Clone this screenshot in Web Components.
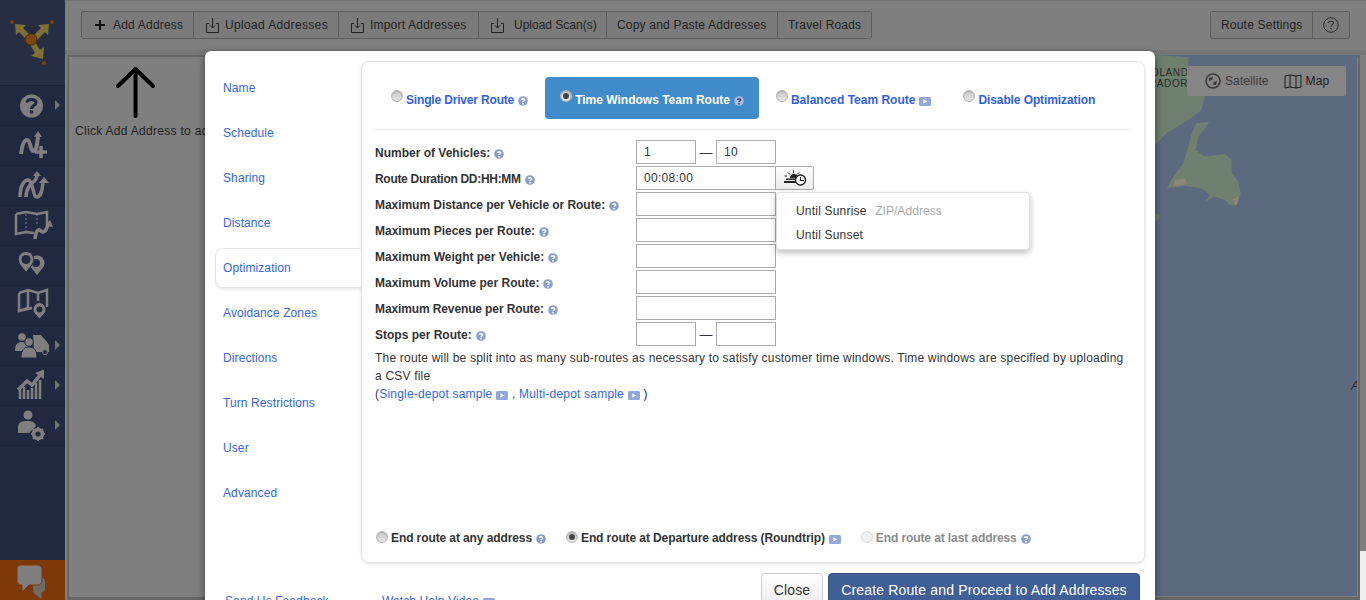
<!DOCTYPE html>
<html lang="en">
<head>
<meta charset="UTF-8">
<title>Route Optimization</title>
<style>
html, body { margin: 0; height: 600px; overflow: hidden; background: #fff; }
body { font: 12px "Liberation Sans", Arial, sans-serif; color: #333; }
</style>
</head>
<body>
<route-app></route-app>

<script>
// small helper: every element gets an open shadow root with its own style + markup
function define(name, css, html, setup) {
    customElements.define(name, class extends HTMLElement {
        constructor() {
            super();
            const root = this.attachShadow({mode: 'open'});
            const tpl = document.createElement('template');
            tpl.innerHTML = `<style>${css}</style>` + (typeof html === 'function' ? html(this) : html);
            root.appendChild(tpl.content.cloneNode(true));
            if (setup) setup(this, root);
        }
    });
}

const questionStroke = (c) => `<path d="M3.4 3.9C3.5 2.4 6.6 2.3 6.6 3.9C6.6 5 5 5 5 6.2" fill="none" stroke="${c}" stroke-width="1.5"/><rect x="4.2" y="7" width="1.6" height="1.5" fill="${c}"/>`;

define('help-dot', `:host{display:inline-block;width:10px;height:10px;vertical-align:-2px;margin-left:4px} svg{display:block}`,
    (el) => {
        const on = el.hasAttribute('light');
        return `<svg width="10" height="10" viewBox="0 0 10 10"><circle cx="5" cy="5" r="4.8" fill="${on ? '#a9b9e2' : '#8a9ccf'}"/>${questionStroke(on ? '#3c4f88' : '#fff')}</svg>`;
    });

define('play-dot', `:host{display:inline-block;width:12px;height:9px;vertical-align:-2px;margin-left:4px} svg{display:block}`,
    `<svg width="12" height="9" viewBox="0 0 12 9"><rect width="12" height="9" rx="1.5" fill="#93a7dc"/><path d="M4.4 2.2L8.2 4.5L4.4 6.8Z" fill="#fff"/></svg>`);

define('radio-mark', `
    :host{display:inline-block;width:12px;height:12px;flex:none;border-radius:50%;box-sizing:border-box;border:1px solid #b4b4b4;
        background:linear-gradient(#c6c6c6,#e6e6e6);box-shadow:inset 0 1px 1px rgba(0,0,0,.12);position:relative}
    :host([checked])::after{content:"";position:absolute;left:2px;top:2px;width:6px;height:6px;border-radius:50%;background:#444}
    :host([disabled]){background:#f0f0f0;border-color:#dcdcdc;box-shadow:none}
`, ``);

define('side-row', `
    :host{display:block;height:39px;border-bottom:1px solid #374869;position:relative}
    svg{display:block;position:absolute;left:0;top:0}
    .arrow{position:absolute;left:55px;top:14px;width:0;height:0;border-left:5px solid #fff;border-top:5px solid transparent;border-bottom:5px solid transparent;opacity:.85}
`, (el) => `<slot></slot>${el.hasAttribute('arrow') ? '<span class="arrow"></span>' : ''}`);

define('side-bar', `
    :host{display:flex;flex-direction:column;width:65px;background:#40537e;flex:none;height:600px}
    .logo{height:85px;background:#4a5c86;border-bottom:1px solid #374869}
    .logo svg{display:block}
    .rows{flex:1}
    .chat{height:40px;background:#ff7310}
    .chat svg{display:block}
`, `
    <div class="logo"><svg width="65" height="85" viewBox="0 0 65 85">
        <g fill="#ffe066">
            <path d="M15 24L26 25L23 28L32 37L28 41L19 32L16 35Z"/>
            <path d="M49 24L38 25L41 28L32 37L36 41L45 32L48 35Z"/>
            <path d="M43 59L31 56L35 53L29 43L34 40L40 50L44 47Z"/>
        </g>
        <circle cx="31" cy="39.500" r="5.800" fill="#ff8a1c" stroke="#7e5a20"/>
        <g fill="#ff7a20"><circle cx="12" cy="22" r="2"/><circle cx="52" cy="22" r="2"/><circle cx="44" cy="63" r="2"/></g>
    </svg></div>
    <div class="rows"><slot></slot></div>
    <div class="chat"><svg width="65" height="40" viewBox="0 0 65 40">
        <path d="M31 18H42C44 18 45 20 45 22V28C45 30 44 32 42 32L41 39L34 33Z" fill="#d8d8d8"/>
        <path d="M21 5H38C40 5 42 7 42 9V21C42 23 40 25 38 25H29L22 32V25H21C19 25 17 23 17 21V9C17 7 19 5 21 5Z" fill="#fff" stroke="#ff7310"/>
    </svg></div>
`);

define('tool-button', `
    :host{display:flex;align-items:center;box-sizing:border-box;height:26px;padding:0 0 0 10px;border-left:1px solid #bbb;letter-spacing:.2px;color:#444;white-space:nowrap;flex:none}
    :host(:first-child){border-left:0}
    :host([icon]){padding-left:12px}
    svg{display:block;flex:none}
`, (el) => {
    const icon = el.getAttribute('icon');
    let svg = '';
    if (icon === 'plus') svg = `<svg width="12" height="12" viewBox="0 0 12 12" style="margin-right:7px"><path d="M6 1V11M1 6H11" stroke="#222" stroke-width="2"/></svg>`;
    if (icon === 'upload') svg = `<svg width="13" height="16" viewBox="0 0 13 16" style="margin-right:var(--gap,6px)"><path d="M3 6.500H.5V15.500H12.500V6.500H10" fill="none" stroke="#444"/><path d="M6.500 1V11M4 8.500L6.500 11L9 8.500" fill="none" stroke="#444"/></svg>`;
    return svg + '<slot></slot>';
});

define('tool-bar', `
    :host{display:flex;justify-content:space-between;height:55px;box-sizing:border-box;padding:11px 16px 0 16px;background:#fff;border-top:1px solid #ddd;border-bottom:5px solid #ececec}
    .group{display:flex;height:26px;border:1px solid #bbb;border-radius:2px;background:#f6f6f6;margin-top:-1px}
    .q{display:flex;align-items:center;justify-content:center;width:37px;box-sizing:border-box;border-left:1px solid #bbb}
    .q svg{display:block}
`, `
    <div class="group">
        <tool-button icon="plus" style="width:111px">Add Address</tool-button>
        <tool-button icon="upload" style="width:145px;letter-spacing:.35px">Upload Addresses</tool-button>
        <tool-button icon="upload" style="width:140px">Import Addresses</tool-button>
        <tool-button icon="upload" style="width:128px;--gap:10px;letter-spacing:0">Upload Scan(s)</tool-button>
        <tool-button style="width:171px">Copy and Paste Addresses</tool-button>
        <tool-button style="width:94px">Travel Roads</tool-button>
    </div>
    <div class="group">
        <tool-button style="width:101px">Route Settings</tool-button>
        <div class="q"><svg width="16" height="16" viewBox="0 0 16 16"><circle cx="8" cy="8" r="7.300" fill="none" stroke="#555"/><path d="M5.600 6C5.800 3.600 10.400 3.600 10.400 6C10.400 7.800 8 7.600 8 9.800" fill="none" stroke="#555" stroke-width="1.100"/><rect x="7.400" y="11" width="1.200" height="1.400" fill="#555"/></svg></div>
    </div>
`);

define('map-pane', `
    :host{display:block;position:relative;height:545px;margin:0 6px 0 2px;box-sizing:border-box;border:2px solid #cfcfcf;border-bottom-width:3px;background:#fff;overflow:hidden}
    .hint{position:absolute;left:6px;top:9px;width:160px;white-space:nowrap;color:#444;letter-spacing:.3px}
    .hint svg{display:block;margin:0 0 6px 40px}
`, `
    <div class="hint">
        <svg width="42" height="52" viewBox="0 0 42 52"><path d="M20.500 50V3M3 20L20.500 3L38 20" fill="none" stroke="#000" stroke-width="4" stroke-linecap="round" stroke-linejoin="round"/></svg>
        Click Add Address to add
    </div>
`);

// the part of the map seen beside the dialog, in its already dimmed colours
define('map-view', `
    :host{display:block;position:absolute;z-index:3;left:1155px;top:55px;width:202px;height:541px;background:#5c6a80;overflow:hidden}
    .land{position:absolute;left:-25px;top:-55px}
    .lbl{position:absolute;color:#2a2a2a;letter-spacing:.6px;font-size:10px;line-height:11px}
    .edge{position:absolute;left:196px;top:323px;font-style:italic;color:#22242c;font-size:13px}
    .ctl{position:absolute;left:32px;top:11px;width:159px;height:30px;background:#858585;border-radius:2px;display:flex;align-items:center;letter-spacing:.1px}
    .ctl svg{display:block;flex:none}
    .sat{color:#3a3a3a;margin:0 15px 0 4px}
    .map{color:#1c1c1c;margin-left:4px}
`, `
    <svg class="land" width="236" height="240" viewBox="0 0 708 720">
        <path fill="#6f806e" d="M75 165L120 168L175 172L175 198L200 230L225 290L212 332L170 362L110 400L75 435Z"/>
        <path fill="#6f806e" d="M200 370L238 365L225 385L205 410L197 450L225 470L285 462L305 480L305 520L325 545L332 580L320 618L300 615L285 600L255 590L225 605L240 585L215 565L165 558L110 565L130 530L160 490L175 440L185 400Z"/>
        <path fill="#8d8a74" d="M135 540L165 535L170 552L130 558ZM310 598L325 590L322 612L312 612Z"/>
        <path fill="#6f806e" d="M75 640L90 645L85 660L75 662Z"/>
    </svg>
    <div class="lbl" style="top:12px;left:-4px">OLAND</div>
    <div class="lbl" style="top:23px;left:-6px">RADOR</div>
    <div class="edge">A</div>
    <div class="ctl">
        <svg width="16" height="16" viewBox="0 0 16 16" style="margin-left:18px"><circle cx="8" cy="8" r="7" fill="none" stroke="#3a3a3a" stroke-width="1.600"/><path d="M4 5L8 4L7 7L4 8ZM9 9L12 8L11 12L8 12Z" fill="#3a3a3a"/></svg>
        <span class="sat">Satellite</span>
        <svg width="18" height="15" viewBox="0 0 18 15"><path d="M1 2L6 1L12 2L17 1V13L12 14L6 13L1 14ZM6 1V13M12 2V14" fill="none" stroke="#1c1c1c"/></svg>
        <span class="map">Map</span>
    </div>
`);

define('nav-item', `
    :host{display:flex;align-items:center;height:45px;color:#3566e3;letter-spacing:.1px;position:relative}
    span{display:block;padding-left:8px}
    :host([active]) span{box-sizing:border-box;width:146px;height:40px;line-height:38px;background:#fff;border:1px solid #e6e6e6;border-right:0;border-radius:8px 0 0 8px;box-shadow:0 2px 3px rgba(0,0,0,.08);padding-left:7px;position:relative;z-index:2}
`, `<span><slot></slot></span>`);

define('route-tab', `
    :host{display:flex;align-items:center;height:42px;box-sizing:border-box;padding:3px 15px 0;font-weight:bold;color:#2f5fe6;white-space:nowrap}
    :host([active]){background:#428bca;color:#fff;border-radius:4px}
    radio-mark{margin-right:3px;margin-top:-7px}
`, `<radio-mark></radio-mark><span><slot></slot></span>`, (el, root) => {
    if (el.hasAttribute('active')) root.querySelector('radio-mark').setAttribute('checked', '');
});

define('end-option', `
    :host{display:flex;align-items:center;font-weight:bold;color:#333;white-space:nowrap;letter-spacing:-.1px}
    :host([disabled]){color:#8a8a8a}
    radio-mark{margin-right:3px;margin-top:-3px}
`, `<radio-mark></radio-mark><span><slot></slot></span>`, (el, root) => {
    const mark = root.querySelector('radio-mark');
    if (el.hasAttribute('checked')) mark.setAttribute('checked', '');
    if (el.hasAttribute('disabled')) mark.setAttribute('disabled', '');
});

define('form-row', `
    :host{display:grid;grid-template-columns:261px auto;align-items:center;height:24px;margin-bottom:2px;position:relative}
    .label{font-weight:bold;color:#333;white-space:nowrap;padding-top:2px}
    .controls{display:flex;align-items:center}
`, `<div class="label"><slot name="label"></slot></div><div class="controls"><slot></slot></div>`);

define('text-box', `
    :host{display:block;box-sizing:border-box;width:140px;height:24px;border:1px solid #aaa;padding:0 7px;line-height:22px;color:#333;letter-spacing:.3px;background:#fff}
    :host([short]){width:60px}
`, `<slot></slot>`);

define('range-dash', `:host{display:block;width:20px;text-align:center;color:#333;font-size:13px}`, `&mdash;`);

define('sun-button', `
    :host{display:flex;align-items:center;justify-content:center;box-sizing:border-box;width:38px;height:24px;border:1px solid #aaa;border-left:0;border-radius:0 2px 2px 0;background:linear-gradient(#fdfdfd,#ececec)}
    svg{display:block}
`, `<svg width="24" height="16" viewBox="0 0 24 16">
    <path d="M1 11H15V13H1ZM3 8.500H15V10H3ZM7 8A4 4 0 0 1 15 8Z" fill="#222"/>
    <path d="M10.500 .5V3M5 2.500L7 4.500M16 2.500L14 4.500M4 6H1.500" stroke="#222"/>
    <circle cx="17.500" cy="10" r="5" fill="#fff" stroke="#222" stroke-width="1.400"/>
    <path d="M17.500 7V10.500H21" fill="none" stroke="#222" stroke-width="1.200"/>
</svg>`);

define('sun-menu', `
    :host{display:block;position:absolute;left:401px;top:26px;width:254px;height:58px;box-sizing:border-box;padding:6px 19px;background:#fff;border:1px solid #e2e2e2;border-radius:4px;box-shadow:0 3px 6px rgba(0,0,0,.25);z-index:5;letter-spacing:.2px;color:#333}
    div{height:24px;line-height:24px;white-space:nowrap}
    span{color:#aaa;margin-left:5px;letter-spacing:.05px}
`, `<div>Until Sunrise <span>ZIP/Address</span></div><div>Until Sunset</div>`);

define('opt-panel', `
    :host{display:flex;flex-direction:column;box-sizing:border-box;width:784px;height:502px;margin-top:10px;padding:15px 15px 15px 13px;background:#fff;border:1px solid #e6e6e6;border-radius:8px;box-shadow:0 1px 3px rgba(0,0,0,.12)}
    .tabs{display:flex;height:42px;padding-bottom:10px;border-bottom:1px solid #e8e8e8;margin-bottom:10px}
    .tabs route-tab:nth-child(1){padding-left:16px;letter-spacing:-.17px}
    .tabs route-tab:nth-child(2){margin-left:2px}
    .tabs route-tab:nth-child(3){margin-left:2px}
    .tabs route-tab:nth-child(4){margin-left:2px;letter-spacing:-.1px}
    .note{line-height:18px;letter-spacing:.2px;margin-top:1px}
    a{color:#3566e3;text-decoration:none}
    .ends{display:flex;margin-top:auto;padding-left:1px;height:18px}
    .ends end-option:nth-child(2){margin-left:20px}
    .ends end-option:nth-child(3){margin-left:20px}
`, `
    <div class="tabs">
        <route-tab>Single Driver Route<help-dot></help-dot></route-tab>
        <route-tab active>Time Windows Team Route<help-dot light></help-dot></route-tab>
        <route-tab>Balanced Team Route<play-dot></play-dot></route-tab>
        <route-tab>Disable Optimization</route-tab>
    </div>
    <form-row><span slot="label">Number of Vehicles:<help-dot></help-dot></span><text-box short>1</text-box><range-dash></range-dash><text-box short>10</text-box></form-row>
    <form-row><span slot="label" style="letter-spacing:-.3px">Route Duration DD:HH:MM<help-dot></help-dot></span><text-box>00:08:00</text-box><sun-button></sun-button><sun-menu></sun-menu></form-row>
    <form-row><span slot="label" style="letter-spacing:-.05px">Maximum Distance per Vehicle or Route:<help-dot></help-dot></span><text-box></text-box></form-row>
    <form-row><span slot="label">Maximum Pieces per Route:<help-dot></help-dot></span><text-box></text-box></form-row>
    <form-row><span slot="label">Maximum Weight per Vehicle:<help-dot></help-dot></span><text-box></text-box></form-row>
    <form-row><span slot="label">Maximum Volume per Route:<help-dot></help-dot></span><text-box></text-box></form-row>
    <form-row><span slot="label" style="letter-spacing:-.12px">Maximum Revenue per Route:<help-dot></help-dot></span><text-box></text-box></form-row>
    <form-row><span slot="label">Stops per Route:<help-dot></help-dot></span><text-box short></text-box><range-dash></range-dash><text-box short></text-box></form-row>
    <div class="note">The route will be split into as many sub-routes as necessary to satisfy customer time windows. Time windows are specified by uploading a CSV file<br>(<a>Single-depot sample</a><play-dot></play-dot> , <a>Multi-depot sample</a><play-dot></play-dot> )</div>
    <div class="ends">
        <end-option>End route at any address<help-dot></help-dot></end-option>
        <end-option checked>End route at Departure address (Roundtrip)<play-dot></play-dot></end-option>
        <end-option disabled>End route at last address<help-dot></help-dot></end-option>
    </div>
`);

define('modal-foot', `
    :host{display:flex;height:40px;margin-top:10px;position:relative}
    .links{display:flex;color:#3566e3;letter-spacing:.1px;padding:21px 0 0 20px;width:536px;box-sizing:border-box;white-space:nowrap}
    .links span:first-child{width:157px}
    button{font:14px "Liberation Sans", Arial, sans-serif;height:34px;padding:0;border-radius:4px;box-sizing:border-box;letter-spacing:.15px}
    .close{width:62px;background:linear-gradient(#fff,#ececec);border:1px solid #ccc;color:#333;margin-left:20px}
    .go{width:312px;margin-left:5px;background:#3f5f96;border:1px solid #36527f;color:#fff}
`, `
    <div class="links"><span>Send Us Feedback</span><span>Watch Help Video<play-dot></play-dot></span></div>
    <button class="close">Close</button><button class="go">Create Route and Proceed to Add Addresses</button>
`);

define('route-modal', `
    :host{display:block;position:absolute;z-index:4;left:205px;top:51px;width:950px;height:620px;background:#fff;border-radius:6px;box-shadow:0 3px 9px rgba(0,0,0,.5)}
    .top{display:flex}
    nav{width:156px;box-sizing:border-box;padding:14px 0 0 10px;flex:none;position:relative;z-index:2}
`, `
    <div class="top">
        <nav>
            <nav-item>Name</nav-item>
            <nav-item>Schedule</nav-item>
            <nav-item>Sharing</nav-item>
            <nav-item>Distance</nav-item>
            <nav-item active>Optimization</nav-item>
            <nav-item>Avoidance Zones</nav-item>
            <nav-item>Directions</nav-item>
            <nav-item>Turn Restrictions</nav-item>
            <nav-item>User</nav-item>
            <nav-item>Advanced</nav-item>
        </nav>
        <opt-panel></opt-panel>
    </div>
    <modal-foot></modal-foot>
`);

define('route-app', `
    :host{display:block;position:relative;width:1366px;height:600px;overflow:hidden}
    .page{display:flex}
    main{flex:1;min-width:0}
    .backdrop{position:absolute;z-index:2;inset:0;background:rgba(0,0,0,.5)}
    .corner{position:absolute;z-index:4;left:1360px;top:551px;width:6px;height:49px;background:#eee}
`, `
    <div class="page">
        <side-bar>
            <side-row arrow><svg width="65" height="40" viewBox="0 0 65 40"><circle cx="31.500" cy="20" r="11.500" fill="#fff"/><path d="M27 16.500C27.300 12.500 36 12.500 36 16.500C36 19.500 31.500 19.500 31.500 23" fill="none" stroke="#40537e" stroke-width="3"/><rect x="29.800" y="24.500" width="3.400" height="3" fill="#40537e"/></svg></side-row>
            <side-row><svg width="65" height="40" viewBox="0 0 65 40"><path d="M21 28C22 20 24 14 27 14C31 14 30 25 33 25C37 25 37 17 38 11" fill="none" stroke="#fff" stroke-width="4"/><path d="M34 11L38 5L42 11Z" fill="#fff"/><path d="M41 20V32M35 26H47" stroke="#fff" stroke-width="3.500"/></svg></side-row>
            <side-row><svg width="65" height="40" viewBox="0 0 65 40"><path d="M20 31C20 20 24 14 28 14C33 14 33 32 37 31C42 30 42 22 43 17M26 31C26 24 28 22 30 19C32 16 36 16 37 10" fill="none" stroke="#fff" stroke-width="3.500"/><path d="M39 17L44 11L49 17ZM33 10L37 5L41 10Z" fill="#fff"/></svg></side-row>
            <side-row><svg width="65" height="40" viewBox="0 0 65 40"><path d="M16 8L26 6L37 8L47 6V19M16 8V28L26 26L34 27" fill="none" stroke="#fff" stroke-width="2.500"/><path d="M26 8V25M37 8V20" stroke="#fff" stroke-dasharray="2 2"/><path d="M35 33C36 24 39 22 41 25C43 27 46 26 48 19" fill="none" stroke="#fff" stroke-width="3.500"/><path d="M45 20L50 14L53 21Z" fill="#fff"/></svg></side-row>
            <side-row><svg width="65" height="40" viewBox="0 0 65 40"><path d="M37 9.500A7.500 7.500 0 0 1 43 21.500L37 29L31 21.500A7.500 7.500 0 0 1 37 9.500Z" fill="#fff"/><circle cx="36" cy="17" r="4" fill="#40537e"/><path d="M26 5.500A8 8 0 0 1 32.500 18L26 26.500L19.500 18A8 8 0 0 1 26 5.500Z" fill="#fff" stroke="#40537e"/><circle cx="26" cy="13.500" r="4.500" fill="#40537e"/></svg></side-row>
            <side-row><svg width="65" height="40" viewBox="0 0 65 40"><path d="M19 7L28 4L38 7L47 4V21M19 7V25L28 22V4M38 7V15M19 25L32 22" fill="none" stroke="#fff" stroke-width="2.500"/><path d="M39.500 16.500A7 7 0 0 1 45 27L39.500 33L34 27A7 7 0 0 1 39.500 16.500Z" fill="#fff" stroke="#40537e"/><circle cx="39.500" cy="23.500" r="3" fill="#40537e"/></svg></side-row>
            <side-row arrow><svg width="65" height="40" viewBox="0 0 65 40"><path d="M33 9H41L47 16L49 19V26H34Z" fill="#fff"/><circle cx="45" cy="26" r="2.500" fill="#40537e" stroke="#fff"/><circle cx="22" cy="11" r="3.800" fill="#fff"/><path d="M15 25C15 19 17 16 22 16C27 16 29 19 29 25Z" fill="#fff"/><circle cx="29" cy="16" r="4.300" fill="#fff" stroke="#40537e"/><path d="M21 32C21 24 24 21 29 21C34 21 37 24 37 32Z" fill="#fff" stroke="#40537e"/></svg></side-row>
            <side-row arrow><svg width="65" height="40" viewBox="0 0 65 40"><path d="M20 33V24M24 33V21M28 33V24M32 33V22M36 33V17M40 33V14" stroke="#fff" stroke-width="2.500"/><path d="M18 24L27 15L32 19L41 8" fill="none" stroke="#fff" stroke-width="3.500"/><path d="M35 7L44 3.500V13Z" fill="#fff"/></svg></side-row>
            <side-row arrow><svg width="65" height="40" viewBox="0 0 65 40"><circle cx="28" cy="9" r="4.500" fill="#fff"/><path d="M18 27V21C18 16 22 15 28 15C33 15 35 17 36 20L29 27Z" fill="#fff"/><circle cx="38" cy="28" r="4.500" fill="none" stroke="#fff" stroke-width="3.500"/><path d="M38 21V35M31 28H45M33 23L43 33M43 23L33 33" stroke="#fff" stroke-width="2"/><circle cx="38" cy="28" r="2.600" fill="#40537e"/></svg></side-row>
        </side-bar>
        <main>
            <tool-bar></tool-bar>
            <map-pane></map-pane>
        </main>
    </div>
    <div class="backdrop"></div>
    <map-view></map-view>
    <route-modal></route-modal>
    <div class="corner"></div>
`);
</script>
</body>
</html>
